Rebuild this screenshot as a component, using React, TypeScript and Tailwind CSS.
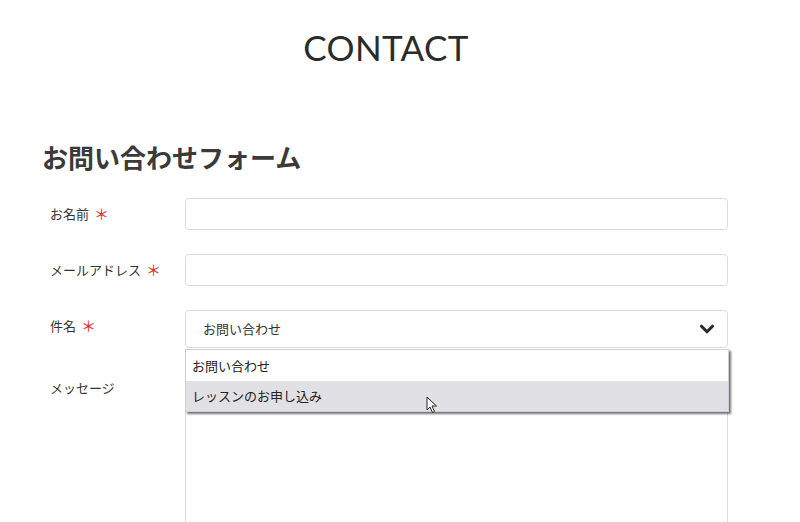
import { ChevronDown } from 'lucide-react';

const jp = { fontFamily: '"Noto Sans CJK JP", "Noto Sans", sans-serif' };

function Label({ text, required }: { text: string; required?: boolean }) {
  return (
    <div className="w-[143px] shrink-0 pl-[8px] pt-[6px]">
      <div className="flex h-[20px] items-center text-[13px] text-[#333]">
        {text}
        {required && <span className="ml-[5px] text-[15px] leading-[20px] text-[#e0301e]">＊</span>}
      </div>
    </div>
  );
}

export default function App() {
  return (
    <div className="h-[522px] overflow-hidden bg-white" style={jp}>
      <h1
        className="pr-[28px] pt-[26px] text-center text-[35px] leading-[42px] tracking-[0.01em] text-[#2b2b2b]"
        style={{ fontFamily: 'Lato, "Liberation Sans", sans-serif' }}
      >
        CONTACT
      </h1>

      <div className="pl-[42px] pr-[72px]">
        <h2 className="mt-[73px] text-[26px] font-bold leading-[32px] text-[#3a3a3a]">お問い合わせフォーム</h2>

        <div className="mt-[25px] flex flex-col gap-[24px]">
          <div className="flex">
            <Label text="お名前" required />
            <div className="h-[32px] flex-1 rounded-[4px] border border-[#dcdcdc] bg-white" />
          </div>

          <div className="flex">
            <Label text="メールアドレス" required />
            <div className="h-[32px] flex-1 rounded-[4px] border border-[#dcdcdc] bg-white" />
          </div>

          <div className="flex">
            <Label text="件名" required />
            <div className="relative flex-1">
              <div className="flex h-[38px] items-center justify-between rounded-[4px] border border-[#dcdcdc] bg-white pl-[17px] pr-[9px] text-[13px] text-[#333]">
                <span>お問い合わせ</span>
                <ChevronDown size={22} strokeWidth={3.4} className="text-[#2a2a2a]" />
              </div>

              <div className="absolute left-0 right-[-1px] top-[39px] z-10 border border-[#cfcfd6] bg-white text-[13px] text-[#222] shadow-[2px_2px_2px_rgba(0,0,0,0.55)]">
                <div className="flex h-[31px] items-center pl-[6px]">お問い合わせ</div>
                <div className="flex h-[30px] items-center bg-[#e1e0e5] pl-[6px]">レッスンのお申し込み</div>
                <svg
                  className="absolute left-[240px] top-[46px]"
                  width="12"
                  height="18"
                  viewBox="0 0 12 18"
                >
                  <path d="M1 1 L1 14 L4 11 L6.5 16.5 L8.5 15.5 L6 10 L10.5 10 Z" fill="white" stroke="#222" strokeWidth="1" />
                </svg>
              </div>
            </div>
          </div>

          <div className="flex">
            <Label text="メッセージ" />
            <div className="h-[200px] flex-1 rounded-[4px] border border-[#dcdcdc] bg-white" />
          </div>
        </div>
      </div>
    </div>
  );
}
